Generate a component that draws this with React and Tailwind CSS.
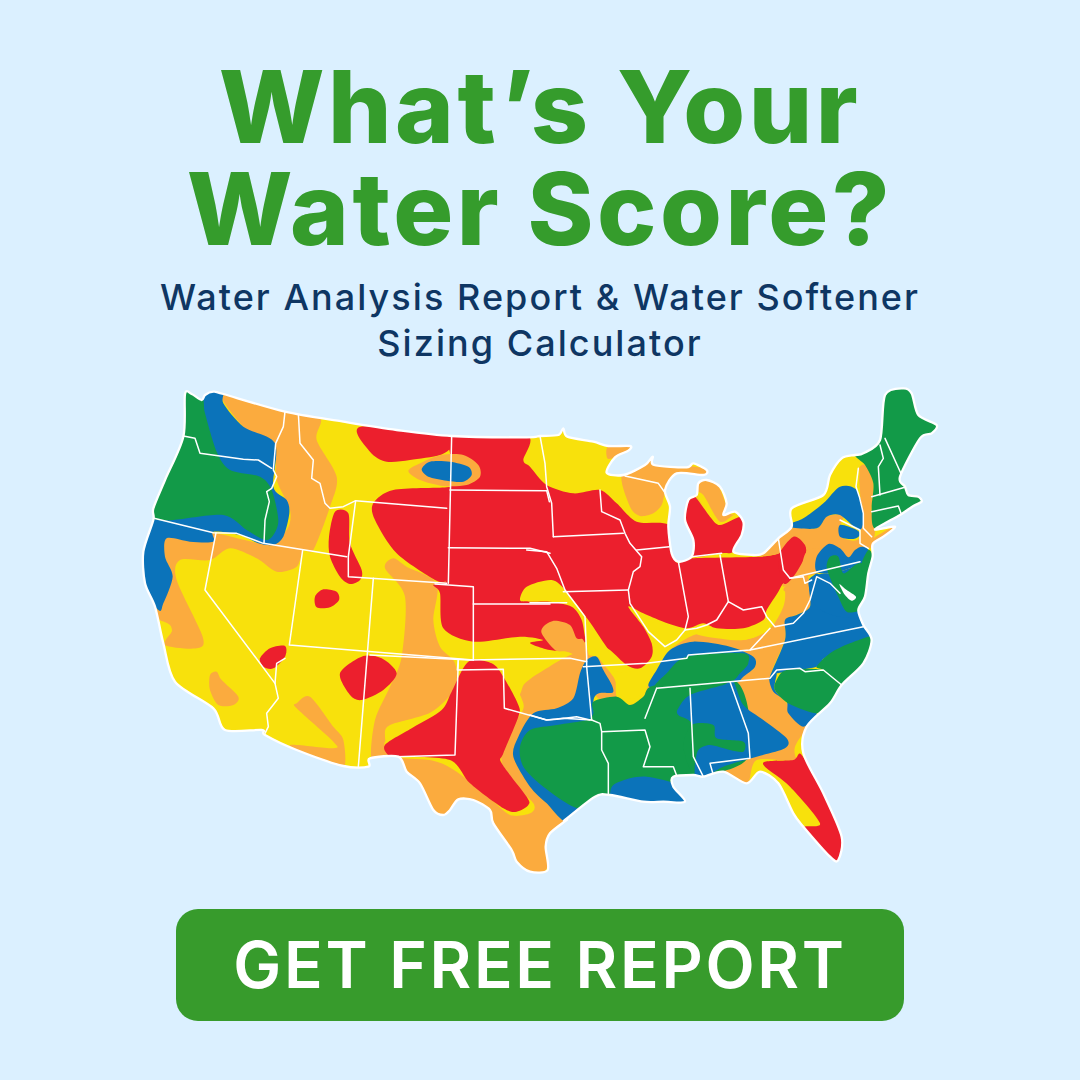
import React from 'react';

const GREEN = '#129a48';
const BLUE = '#0b73ba';
const RED = '#ec1f2d';
const YELLOW = '#f8e10c';
const ORANGE = '#fbab3e';

// points were traced from crops, each crop has its own origin
const pts = (s, dx = 0, dy = 0) =>
  s.trim().split(/\s+/).map((p) => {
    const [x, y] = p.split(',').map(Number);
    return [x + dx, y + dy];
  });
const w = (s) => pts(s);
const e = (s) => pts(s, 1200, 0);
const tx = (s) => pts(s, 720, 780);
const ne = (s) => pts(s, 1830, 180);

// closed catmull-rom through the points
function smooth(p) {
  const n = p.length;
  let d = `M${p[0][0]} ${p[0][1]}`;
  for (let i = 0; i < n; i++) {
    const a = p[(i - 1 + n) % n];
    const b = p[i];
    const c = p[(i + 1) % n];
    const f = p[(i + 2) % n];
    const c1 = [b[0] + (c[0] - a[0]) / 7, b[1] + (c[1] - a[1]) / 7];
    const c2 = [c[0] - (f[0] - b[0]) / 7, c[1] - (f[1] - b[1]) / 7];
    d += `C${c1[0].toFixed(1)} ${c1[1].toFixed(1)} ${c2[0].toFixed(1)} ${c2[1].toFixed(1)} ${c[0]} ${c[1]}`;
  }
  return d + 'Z';
}

const line = (p) => 'M' + p.map(([x, y]) => `${x} ${y}`).join('L');

const outline = [
  ...w('165,42 185,42 215,60 225,45 250,35 280,42 465,95 640,125 800,150 965,168 1190,172'),
  ...e('30,168 85,165 100,145 112,170 190,185 235,198 300,198 295,212 255,232 230,278 280,285 345,255 368,230 372,255 470,262 490,250 530,270 520,285 440,280 405,330 420,380 415,440 425,520 445,545 485,530 490,480 465,420 475,360 500,345 505,310 530,300 570,320 590,370 580,405 615,395 640,425 635,465 610,515 670,525 700,520 745,475 785,440 785,385 880,345 900,285 935,235 975,225 1000,220 1050,180 1065,45 1120,25 1145,40 1165,105 1220,135 1205,160 1170,175 1110,290 1125,320 1135,345 1165,350 1175,365 1150,378 1110,405'),
  ...ne('405,268 465,260 430,290 398,312 398,350 385,400 375,470 355,510'),
  ...e('1000,735 1025,780 1000,850 935,915 900,970 830,1040 820,1120 880,1240 935,1370 925,1440 900,1430 820,1340 790,1300 745,1210 690,1175 650,1210 580,1175 520,1190 490,1185 430,1190 430,1220 465,1265 400,1265 340,1265 240,1245 195,1250 105,1320'),
  ...tx('590,540 540,580 527,620 533,690 480,695 440,665 425,630 370,550 360,510 310,480 265,478 240,510 220,525 190,510 150,430 110,395 85,350'),
  ...w('720,1135 715,1160 640,1158 500,1110 405,1065 395,1050 285,1050 250,985 135,905 100,790 75,680 45,610 40,515 70,420 70,385 105,300 160,170'),
];

// painted back to front over a yellow base
const regions = [
  [ORANGE, w('270,30 465,95 570,115 560,180 620,290 600,380 550,510 520,510 500,560 440,575 380,535 300,505 240,540 150,540 140,600 218,770 200,805 105,795 125,750 90,720 60,680 100,470 250,460 400,490 470,450 480,390 440,300 430,200 340,140')],
  [YELLOW, w('92,725 120,735 125,755 105,775 90,770')],
  [BLUE, w('215,60 225,30 280,30 280,70 340,140 435,190 430,320 470,360 478,400 460,470 430,495 385,490 330,465 250,455 250,485 180,485 110,475 105,530 128,590 100,670 85,690 20,600 20,420 100,350')],
  [GREEN, w('150,30 215,50 225,100 260,215 300,270 390,290 425,330 445,420 430,465 405,480 350,450 280,405 130,420 70,418 20,400 60,300')],
  [ORANGE, w('260,875 275,900 325,950 310,975 265,975 240,930 240,885')],
  [ORANGE, w('500,970 540,950 610,1040 640,1080 640,1165 560,1140 480,1095 610,1105 610,1085 500,985')],
  [ORANGE, w('765,565 790,535 830,560 920,610 910,720 930,800 975,850 975,940 850,1040 765,1085 780,1135 725,1140 735,1020 780,920 815,830 825,650')],
  [RED, w('615,395 655,400 660,490 695,570 690,600 660,612 630,590 600,530 597,470')],
  [RED, w('555,650 580,628 620,635 627,660 600,682 560,682')],
  [RED, w('390,835 420,805 465,798 465,830 430,865 400,860')],
  [RED, w('630,880 695,830 755,835 800,880 760,930 695,960 660,945')],

  // texas and the plains south of the red belt
  [ORANGE, tx('80,345 410,200 465,130 530,85 590,50 640,40 700,100 600,300 590,560 500,720 400,700 200,540 100,420')],
  [ORANGE, e('170,830 250,860 260,950 300,975 340,950 355,915 380,870 420,810 480,770 530,760 640,780 720,745 760,650 765,620 830,585 840,680 770,720 765,780 720,900 770,970 830,1040 810,1080 800,1140 680,1140 650,1215 580,1175 500,1150 300,1000 200,950')],
  [YELLOW, e('290,680 345,720 465,745 520,740 560,745 640,750 700,725 720,690 750,640 765,635 760,680 720,745 640,780 530,770 480,760 440,785 400,810 370,840 350,870 365,830 380,790 350,750 300,710')],
  [YELLOW, e('240,830 290,860 350,870 365,880 345,930 310,955 275,945 250,890 205,830')],
  [ORANGE, ne('405,292 465,258 440,285 400,312')],

  [YELLOW, tx('45,290 60,255 180,218 250,155 300,70 400,90 460,190 440,240 395,330 410,410 490,490 480,520 420,525 360,475 260,395 190,362 90,355 60,350')],
  [RED, w('1015,845 1085,850 1120,890 1165,975 1165,1010')
    .concat(tx('400,340 395,370 470,470 475,495 440,515 400,505 300,430 240,360 90,350 60,350 45,315 130,262 215,210 245,155'))],

  // main red belt
  [RED, [
    ...w('960,160 1190,165 1180,240'),
    ...e('0,260 50,315 130,340 210,330 260,370 320,425 415,435 425,520 445,550 485,535 690,530 745,520 760,500 790,470 825,495 825,530 790,590 760,610 745,635 710,690 700,720 640,745 560,745 520,730 470,745 400,725 340,700 295,680 340,740 365,790 365,830 330,865 290,855 240,810 180,770 160,790 75,812 0,790'),
    ...w('1240,780 1170,770 1030,785 940,745 930,640 910,615 948,605 915,600 800,520 735,420 730,370 790,330 950,322 960,310 960,220'),
  ]],
  [RED, w('692,140 965,168 965,200 930,225 840,240 770,245 720,215')],
  [YELLOW, e('-30,660 -10,620 65,600 110,635 175,720 240,815 285,860 300,875 245,870 200,810 170,790 155,720 125,680 60,665 0,665')],
  [ORANGE, e('35,760 45,735 75,722 120,735 140,775 160,780 175,835 110,815 75,810')],
  [ORANGE, w('835,272 880,245 935,225 1000,225 1045,255 1050,290 1010,315 940,318 870,300')],
  [BLUE, w('875,268 900,245 960,245 1015,260 1025,285 1000,305 950,302 895,290')],

  // lakes region
  [ORANGE, e('235,198 300,198 295,212 255,232 232,235')],
  [ORANGE, e('275,285 345,250 372,225 470,255 540,270 520,295 430,290 405,340 395,375 370,400 330,408 300,380')],
  [ORANGE, e('495,330 505,300 560,310 600,400 630,395 640,430 570,440 500,350')],
  [YELLOW, e('497,340 520,345 570,425 620,400 635,420 570,437 540,410')],
  [RED, e('475,360 495,350 540,410 570,435 630,410 640,430 635,470 610,515 575,520 485,530 490,480 465,420')],

  // south east
  [BLUE, tx('430,350 445,290 490,220 560,205 610,175 630,100 650,60 680,50 700,90 730,155 670,185 710,470 650,480 590,545 530,490 480,440')],
  [BLUE, e('355,915 380,870 420,810 490,785 600,800 670,830 675,860 640,890 610,910 470,925 380,925')],
  [GREEN, e('190,1000 190,965 260,950 300,975 340,950 380,915 620,905 660,1120 560,1180 470,1190 430,1210 460,1300 200,1290 130,1280 40,1220 -20,1160 -30,1100 0,1050 80,1035 170,1020')],
  [GREEN, e('375,925 410,880 470,830 640,820 655,850 630,880 600,905 480,925')],
  [BLUE, e('240,1245 250,1215 300,1195 350,1190 420,1205 430,1215 445,1240 465,1265 460,1300 240,1300')],
  [BLUE, e('445,985 480,945 580,915 610,905 640,975 700,1020 770,1075 765,1105 680,1130 580,1160 520,1195 495,1190 490,1040 445,1005')],
  [GREEN, e('485,1035 550,1035 560,1075 640,1085 640,1115 600,1110 540,1095 505,1110 495,1150 488,1185 460,1100')],
  [YELLOW, e('800,1135 795,1100 825,1060 835,1135')],
  [YELLOW, e('678,1150 710,1140 780,1200 870,1330 825,1350 790,1300 780,1230 720,1195 690,1180')],
  [RED, e('705,1145 790,1140 815,1125 880,1240 940,1370 925,1450 900,1430 820,1345 870,1330 780,1220 710,1165')],

  // carolinas and virginia
  [BLUE, e('765,720 800,705 840,680 838,620 860,580 900,620 950,680 985,695 1000,735 1030,780 890,830 860,860 740,880 720,890 765,780')],
  [BLUE, e('718,895 740,880 735,930 780,970 860,1000 820,1040 775,1000 770,965 730,935')],
  [GREEN, e('860,860 900,820 960,790 1035,770 1000,850 935,915 880,870')],
  [GREEN, e('740,900 770,870 880,870 930,915 900,970 860,1000 775,970 735,930')],

  // north east
  [ORANGE, ne('45,345 115,295 150,262 230,265 260,230 310,225 300,260 310,295 360,290 360,150 355,90 375,75 400,130 395,210 405,270 395,320 370,330 230,400 185,410 130,440 140,410 195,350 165,295 120,340')],
  [RED, e('745,530 790,470 825,495 825,530 790,590 760,610')],
  [YELLOW, ne('150,210 240,180 255,120 295,60 345,45 358,90 350,150 300,140 250,190 190,235 155,245')],
  [BLUE, ne('150,262 155,250 190,235 250,190 300,140 350,150 370,220 370,250 355,270 300,225 260,230 230,265')],
  [BLUE, ne('300,255 350,270 360,285 340,297 300,290')],
  [ORANGE, ne('185,410 225,400 260,385 300,370 310,340 205,330')],
  [BLUE, ne('205,430 225,405 280,400 330,385 370,370 395,520 300,530 230,500')],
  [BLUE, ne('230,395 230,350 265,312 300,325 325,352 345,330 365,320 385,330 365,370 330,385 280,400')],
  [GREEN, ne('260,380 270,350 295,350 310,400 345,375 365,370 385,400 375,470 360,510 320,515 295,470 275,425')],
  [GREEN, ne('365,370 385,330 398,350 388,400 370,405')],
  [GREEN, e('975,220 1050,170 1060,30 1125,15 1235,130 1180,190 1110,290 1185,350 1185,385 1110,405 1035,445 1025,385 1030,310 1005,255')],
  ['#ffffff', ne('298,432 320,450 348,470 335,482 315,465')],
];

const stateLines = [
  w('160,168 195,175 210,220 340,238 385,240 425,265'),
  w('465,95 460,140 437,190 430,270 440,290 425,325 410,335 418,365 405,420 402,490'),
  w('505,100 510,190 550,240 545,295 570,310 585,370 600,385 640,380 677,362'),
  w('677,362 950,385'),
  w('677,362 655,530 655,590 950,610'),
  w('965,168 955,610'),
  w('960,330 1250,332 1258,365'),
  w('955,503 1200,505 1260,520'),
  w('915,612 1030,620 1030,840'),
  w('1030,672 1260,672'),
  w('72,415 250,458 320,460 400,490 650,530'),
  w('258,458 225,630 435,910 445,955 410,1000 415,1040 405,1060'),
  w('518,510 478,795 1030,840'),
  w('465,835 440,850 435,910'),
  w('730,595 685,1160'),
  w('985,840 975,1125 800,1130'),
  tx('265,60 262,90 400,88 403,205 530,240 560,238 620,230 660,240'),
  tx('0,45 300,60 600,55 650,65'),
  e('30,168 45,250 50,320 65,370 70,470'),
  e('70,470 280,460'),
  e('210,330 215,395 270,420 285,460 300,490 335,530 330,560 310,575 295,630 300,670 355,755 405,800 440,780 465,750 500,745 530,735 560,720 595,665 640,690 695,680 710,710 735,740 790,730 820,700 840,660 860,590 900,610 930,640'),
  e('320,510 418,500'),
  e('100,635 295,630'),
  e('-10,510 50,515 80,565 105,630 165,710 170,830 170,860 185,1020 210,1030 215,1055 345,1050 360,1100 340,1160 430,1160 445,1200'),
  e('0,668 110,668'),
  e('445,545 475,710 465,750'),
  e('570,525 595,665'),
  e('485,530 575,520'),
  e('285,288 385,310 410,345'),
  e('745,475 760,570 780,595 990,545'),
  e('780,595 820,590 825,610 845,600'),
  e('0,1005 50,1020 100,1015 185,1020'),
  e('215,1055 215,1110 235,1150 235,1245'),
  e('160,860 350,850 470,835 475,825 660,810 1000,740'),
  e('660,810 720,745'),
  e('380,925 600,905 720,895 740,870 810,865 825,875 880,870 935,915'),
  e('380,925 345,1015'),
  e('600,905 655,1060 660,1135 540,1150 550,1185'),
  e('480,925 490,1130 520,1190'),
  e('1065,175 1115,285'),
  e('1050,195 1060,235 1045,260 1050,345'),
  e('1025,350 1130,320'),
  e('1025,395 1105,378 1115,405'),
  ne('355,85 348,140 358,170 370,220 370,265 395,290'),
  ne('300,240 360,270 360,310 385,325'),
];

function WaterMap() {
  return (
    <svg viewBox="0 0 2460 1500" className="mt-[14px] h-[500px] w-[820px] shrink-0 overflow-visible">
      <defs>
        <clipPath id="us">
          <path d={smooth(outline)} />
        </clipPath>
      </defs>
      <g clipPath="url(#us)">
        <rect width="2460" height="1500" fill={YELLOW} />
        {regions.map(([color, p], i) => (
          <path key={i} d={smooth(p)} fill={color} />
        ))}
        <g fill="none" stroke="#ffffff" strokeWidth="4.5" strokeLinejoin="round" strokeLinecap="round">
          {stateLines.map((p, i) => (
            <path key={i} d={line(p)} />
          ))}
        </g>
      </g>
      <path d={smooth(outline)} fill="none" stroke="#ffffff" strokeWidth="7" strokeLinejoin="round" />
    </svg>
  );
}

export default function App() {
  return (
    <div className="flex h-[1080px] w-[1080px] flex-col items-center overflow-hidden bg-[#dbf0ff] font-[Inter,sans-serif]">
      <h1 className="mt-[56px] text-center text-[100px] leading-[102px] font-extrabold tracking-[0.035em] text-[#359c2c]">
        What’s Your
        <br />
        Water Score?
      </h1>
      <p className="mt-[14px] text-center text-[36px] leading-[46px] font-medium tracking-[0.057em] text-[#0e3663]">
        Water Analysis Report &amp; Water Softener
        <br />
        Sizing Calculator
      </p>
      <WaterMap />
      <button className="mt-[29px] flex h-[112px] w-[728px] shrink-0 items-center justify-center rounded-[22px] bg-[#379b2c] text-[64px] font-semibold tracking-[0.042em] text-white">
        GET FREE REPORT
      </button>
    </div>
  );
}
